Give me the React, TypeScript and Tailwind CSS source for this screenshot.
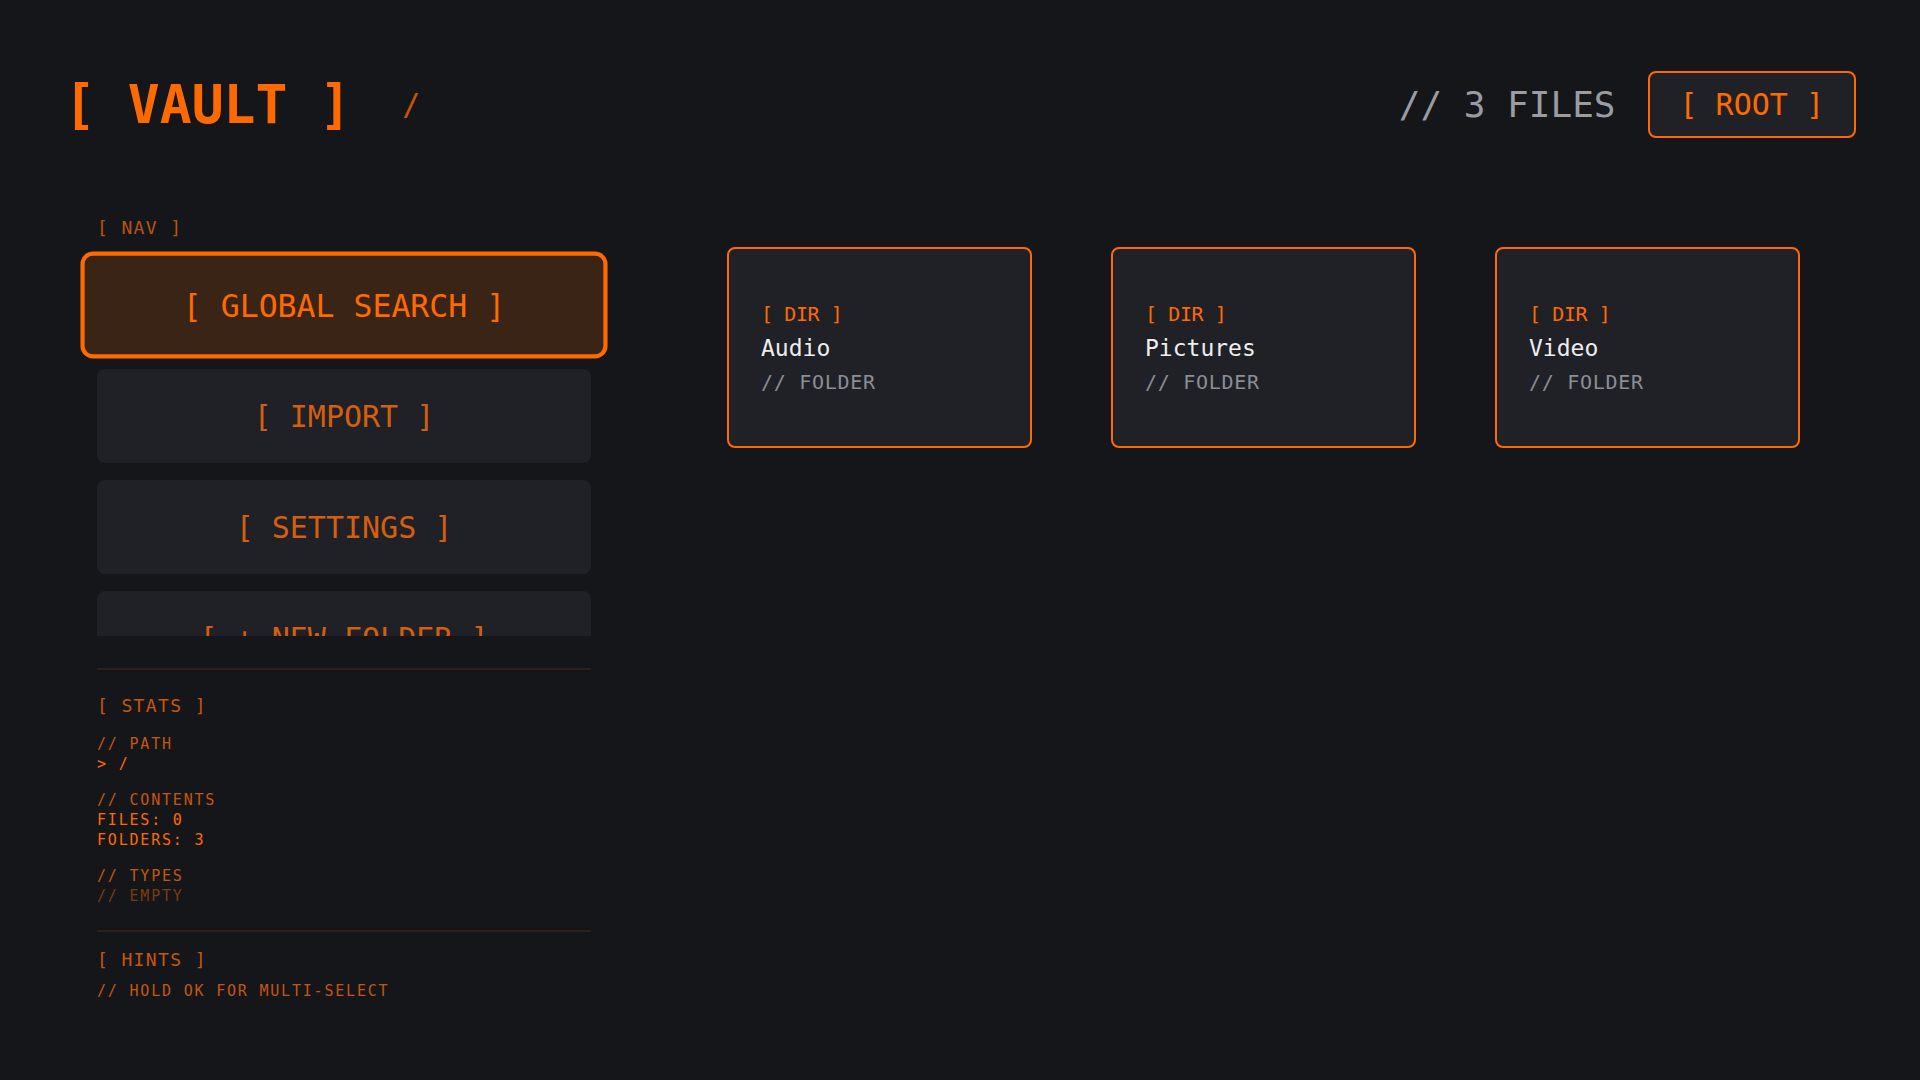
import React from 'react';

const FONT = { fontFamily: '"DejaVu Sans Mono", "Liberation Mono", monospace' };

const navItems = ['[ GLOBAL SEARCH ]', '[ IMPORT ]', '[ SETTINGS ]', '[ + NEW FOLDER ]'];

const folders = ['Audio', 'Pictures', 'Video'];

const NavButton: React.FC<{ label: string; focused?: boolean }> = ({ label, focused }) => (
  <div
    className={`h-[94px] shrink-0 rounded-lg flex items-center justify-center text-[30px] ${
      focused
        ? 'bg-[#3a2416] text-[#ff6a00] ring-4 ring-[#ff6a00] scale-105'
        : 'bg-[#1f2126] text-[#d45f0e]'
    }`}
  >
    {label}
  </div>
);

const StatLine: React.FC<{ children: React.ReactNode; tone?: 'dim' | 'bright' | 'faint' }> = ({ children, tone = 'dim' }) => (
  <div
    className={`text-[15px] leading-5 tracking-[0.12em] ${
      tone === 'bright' ? 'text-[#ff6a00]' : tone === 'faint' ? 'text-[#7a3c12]' : 'text-[#c4570e]'
    }`}
  >
    {children}
  </div>
);

const FolderCard: React.FC<{ name: string }> = ({ name }) => (
  <div className="h-[201px] rounded-lg border-2 border-[#ff6a00] bg-[#1f2127] px-8 flex flex-col justify-center gap-1">
    <div className="text-xl leading-7 tracking-[-0.02em] text-[#ff6a00]">[ DIR ]</div>
    <div className="text-[23px] leading-8 text-[#eeeeee]">{name}</div>
    <div className="text-xl leading-7 tracking-[0.036em] text-[#8b8e94]">// FOLDER</div>
  </div>
);

export default function App() {
  return (
    <div className="min-h-screen bg-[#15161a] px-16 pt-[71px]" style={FONT}>
      {/* header */}
      <div className="flex items-center justify-between h-[67px]">
        <div className="flex items-center gap-[51px]">
          <h1 className="text-[53px] leading-none font-bold text-[#ff6a00]">[ VAULT ]</h1>
          <span className="text-3xl text-[#c4550a]">/</span>
        </div>
        <div className="flex items-center gap-8">
          <span className="text-4xl text-[#9a9ca1]">// 3 FILES</span>
          <div className="h-[67px] px-[30px] flex items-center rounded-lg border-2 border-[#ff6a00] bg-[#1f2127] text-3xl text-[#ff6a00]">
            [ ROOT ]
          </div>
        </div>
      </div>

      <div className="flex mt-[76px]">
        {/* sidebar */}
        <aside className="w-[560px] shrink-0 px-[33px]">
          <div className="text-lg leading-7 tracking-[0.076em] text-[#b9540f] mb-[6px]">[ NAV ]</div>
          <div className="-mx-[33px] px-[33px] pt-[10px] h-[388px] overflow-hidden flex flex-col gap-[17px]">
            {navItems.map((item, i) => (
              <NavButton key={item} label={item} focused={i === 0} />
            ))}
          </div>

          <div className="mt-8 h-[2px] bg-[#2f2017]" />

          <div className="mt-[22px] text-lg leading-7 tracking-[0.076em] text-[#c4570e]">[ STATS ]</div>
          <div className="mt-[14px] flex flex-col gap-4">
            <div>
              <StatLine>// PATH</StatLine>
              <StatLine tone="bright">&gt; /</StatLine>
            </div>
            <div>
              <StatLine>// CONTENTS</StatLine>
              <StatLine tone="bright">FILES: 0</StatLine>
              <StatLine tone="bright">FOLDERS: 3</StatLine>
            </div>
            <div>
              <StatLine>// TYPES</StatLine>
              <StatLine tone="faint">// EMPTY</StatLine>
            </div>
          </div>

          <div className="mt-[24px] h-[2px] bg-[#2f2017]" />

          <div className="mt-[14px] text-lg leading-7 tracking-[0.076em] text-[#c4570e]">[ HINTS ]</div>
          <div className="mt-[7px]">
            <StatLine>// HOLD OK FOR MULTI-SELECT</StatLine>
          </div>
        </aside>

        {/* folders */}
        <main className="flex-1 pl-[103px] pt-[33px]">
          <div className="grid grid-cols-[repeat(3,305px)] gap-x-[79px]">
            {folders.map((f) => (
              <FolderCard key={f} name={f} />
            ))}
          </div>
        </main>
      </div>
    </div>
  );
}
